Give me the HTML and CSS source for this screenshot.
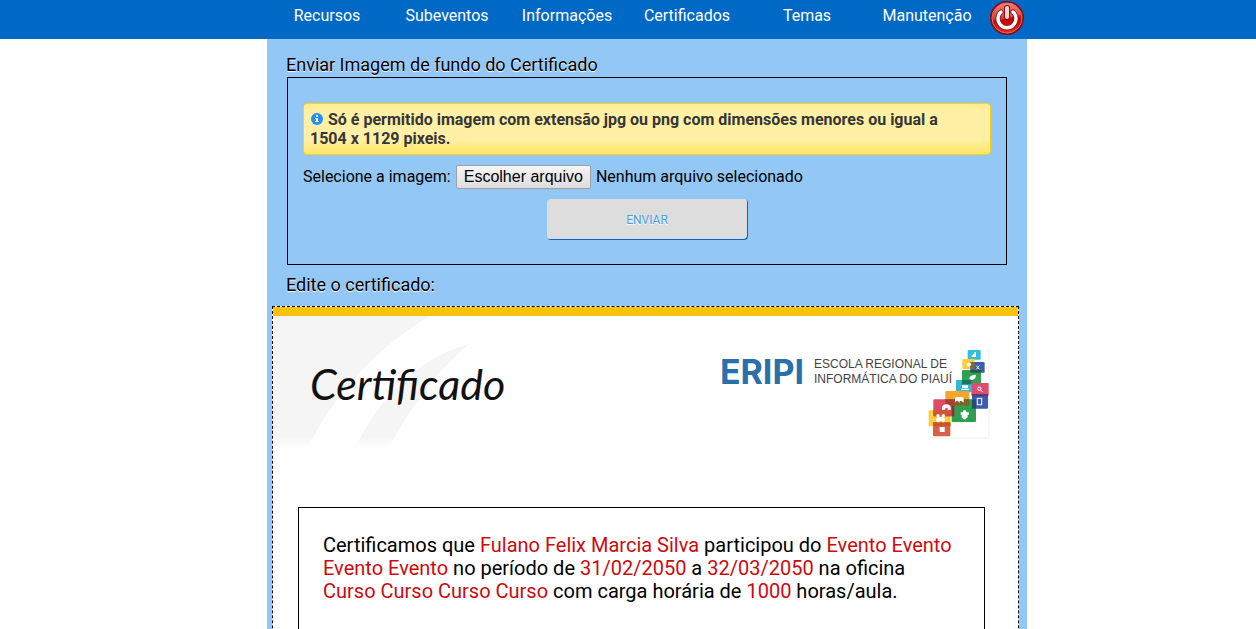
FILE: index.html
```
<!DOCTYPE html>
<html lang="pt-BR">
<head>
<meta charset="utf-8">
<title>Certificados</title>
<link rel="stylesheet" href="styles.css">
</head>
<body>
<header class="topbar">
  <nav class="menu" aria-label="Principal">
    <a class="menu-link" href="#recursos">Recursos</a>
    <a class="menu-link" href="#subeventos">Subeventos</a>
    <a class="menu-link" href="#informacoes">Informações</a>
    <a class="menu-link" href="#certificados">Certificados</a>
    <a class="menu-link" href="#temas">Temas</a>
    <a class="menu-link" href="#manutencao">Manutenção</a>
    <a class="menu-exit" href="#sair" aria-label="Sair">
      <svg width="34" height="34" viewBox="0 0 34 34" aria-hidden="true">
        <defs>
          <linearGradient id="exit-fill" x1="0" y1="0" x2="0" y2="1">
            <stop offset="0" stop-color="#e8605c"/>
            <stop offset="0.45" stop-color="#d21a18"/>
            <stop offset="0.55" stop-color="#b80606"/>
            <stop offset="1" stop-color="#ee2a22"/>
          </linearGradient>
        </defs>
        <circle cx="17" cy="17" r="17" fill="#8c0a10"/>
        <circle cx="17" cy="17" r="15" fill="url(#exit-fill)" stroke="#e0706c" stroke-width="1"/>
        <path d="M3 19A14 14 0 0 1 31 14C24 14 12 21 3 19Z" fill="#fff" opacity="0.2"/>
        <path d="M11 11A9 9 0 1 0 23 11" fill="none" stroke="#8d1010" stroke-width="5" stroke-linecap="round"/>
        <path d="M17 7V16" stroke="#8d1010" stroke-width="6" stroke-linecap="round"/>
        <path d="M11 11A9 9 0 1 0 23 11" fill="none" stroke="#fff" stroke-width="3.4" stroke-linecap="round"/>
        <path d="M17 7V16" stroke="#f3d4d4" stroke-width="4" stroke-linecap="round"/>
      </svg>
    </a>
  </nav>
</header>
<div class="page">
  <main class="content">
    <h2 class="title">Enviar Imagem de fundo do Certificado</h2>
    <form class="upload">
      <p class="notice">
        <svg class="notice-icon" width="12" height="12" viewBox="0 0 12 12" aria-hidden="true">
          <circle cx="6" cy="6" r="6" fill="#2191f5"/>
          <path d="M5 2H7V4H5ZM4 5H7V8H8V9H4V8H5V6H4Z" fill="#fff"/>
        </svg>
        Só é permitido imagem com extensão jpg ou png com dimensões menores ou igual a 1504 x 1129 pixeis.
      </p>
      <div class="file-row">
        <label for="arquivo">Selecione a imagem:</label>
        <input class="file-input" type="file" id="arquivo" accept=".jpg,.png" tabindex="-1">
        <button class="file-button" type="button" onclick="document.getElementById('arquivo').click()">Escolher arquivo</button>
        <span>Nenhum arquivo selecionado</span>
      </div>
      <button class="submit" type="submit">ENVIAR</button>
    </form>
    <h2 class="title">Edite o certificado:</h2>
    <section class="certificate">
      <div class="cert-head">
        <svg class="cert-art" width="240" height="132" viewBox="0 0 240 132" aria-hidden="true">
          <defs>
            <linearGradient id="art-fill" x1="0" y1="0" x2="0" y2="132" gradientUnits="userSpaceOnUse">
              <stop offset="0.92" stop-color="#f5f5f5"/>
              <stop offset="1" stop-color="#fff"/>
            </linearGradient>
          </defs>
          <path d="M0 0H156Q78 48 34 132H0Z" fill="url(#art-fill)"/>
          <path d="M196 28Q124 48 82 132H116Q150 66 196 28Z" fill="url(#art-fill)"/>
        </svg>
        <h1 class="cert-title">Certificado</h1>
        <div class="brand">
          <span class="brand-name">ERIPI</span>
          <span class="brand-text">ESCOLA REGIONAL DE<br>INFORMÁTICA DO PIAUÍ</span>
          <svg class="brand-tiles" width="63" height="91" viewBox="33 27 189 273" aria-hidden="true">
            <path d="M219 30V297H36" fill="none" stroke="#eee" stroke-width="3"/>
            <g opacity="0.94">
              <rect x="155" y="33" width="39" height="29" rx="3" fill="#27bcd8"/>
              <rect x="139" y="60" width="37" height="30" rx="3" fill="#fbcb2f"/>
              <rect x="163" y="69" width="43" height="32" rx="3" fill="#2f55a5"/>
              <rect x="163" y="69" width="13" height="21" fill="#76602c"/>
              <rect x="138" y="93" width="57" height="43" rx="3" fill="#229c4b"/>
              <rect x="163" y="93" width="32" height="8" fill="#174b3a"/>
              <rect x="120" y="123" width="47" height="37" rx="3" fill="#27b5d0"/>
              <rect x="138" y="123" width="29" height="13" fill="#116c59"/>
              <rect x="166" y="132" width="52" height="39" rx="3" fill="#da4168"/>
              <rect x="88" y="156" width="72" height="44" rx="3" fill="#f3a022"/>
              <rect x="168" y="165" width="48" height="44" rx="3" fill="#3151ab"/>
              <rect x="168" y="165" width="48" height="7" fill="#552b70"/>
              <rect x="107" y="181" width="73" height="68" rx="3" fill="#229b48"/>
              <rect x="107" y="181" width="53" height="19" fill="#765b19"/>
              <rect x="168" y="181" width="12" height="28" fill="#17445c"/>
              <rect x="38" y="214" width="66" height="48" rx="3" fill="#fbcb32"/>
              <rect x="52" y="181" width="63" height="51" rx="3" fill="#db405d"/>
              <rect x="88" y="181" width="27" height="19" fill="#a43224"/>
              <rect x="107" y="200" width="8" height="32" fill="#63362c"/>
              <rect x="52" y="214" width="52" height="18" fill="#d04c27"/>
              <rect x="51" y="250" width="52" height="42" rx="3" fill="#d45a3c"/>
              <rect x="51" y="250" width="52" height="12" fill="#c84a1d"/>
            </g>
            <g fill="#fff">
              <path d="M167 54V49H171V45H175V39H180V54Z"/>
              <path d="M152 77A7 6 0 0 1 166 77L162 82H155Z"/>
              <path d="M160 119Q161 107 180 108Q180 121 166 123Z"/>
              <path d="M138 139H156V147H138ZM136 149H158V153H136Z"/>
              <path d="M117 188V179Q117 174 123 174H136Q143 174 143 180V191L137 186H131V192L125 185Z"/>
              <path d="M78 213V207A13 11 0 0 1 104 207V213H95V206H89L86 213Z"/>
              <path d="M134 220H140L143 214H149L152 220H159V227H155V235L148 241H143L137 235V227H134Z"/>
              <circle cx="66" cy="230" r="5"/><circle cx="82" cy="230" r="5"/>
              <path d="M59 240L67 234H81L88 240L84 250H79V246H70V250H63Z"/>
              <rect x="71" y="264" width="15" height="15"/>
            </g>
            <g fill="none" stroke="#fff" stroke-width="3">
              <path d="M181 80L190 91M190 80L181 91"/>
              <circle cx="190" cy="149" r="5"/><path d="M194 153L200 159"/>
              <rect x="184" y="178" width="13" height="19"/>
            </g>
          </svg>
        </div>
      </div>
      <div class="cert-body">
        <p class="cert-text">Certificamos que <span class="field">Fulano Felix Marcia Silva</span> participou do <span class="field">Evento Evento Evento Evento</span> no período de <span class="field">31/02/2050</span> a <span class="field">32/03/2050</span> na oficina <span class="field">Curso Curso Curso Curso</span> com carga horária de <span class="field">1000</span> horas/aula.</p>
      </div>
    </section>
  </main>
</div>
</body>
</html>
```
FILE: styles.css
```
* { box-sizing: border-box; }

body {
  margin: 0;
  background: #fff;
  color: #000;
  font-family: "Trebuchet MS", Roboto, sans-serif;
  font-size: 16px;
  line-height: 20px;
}

.topbar,
.page { padding-left: 38px; }

.topbar { background: #0069c6; }

.menu {
  display: flex;
  max-width: 760px;
  min-height: 39px;
  margin: 0 auto;
}

.menu-link {
  flex: 1 1 120px;
  padding-top: 6px;
  color: #fff;
  text-align: center;
  text-decoration: none;
}

.menu-exit {
  flex: 0 0 40px;
  padding: 1px 3px 0;
}

.menu-exit svg { display: block; }

.content {
  max-width: 760px;
  min-height: 100vh;
  margin: 0 auto;
  padding: 14px 8px 0 5px;
  background: #93c7f6;
}

.title {
  margin: 0 14px;
  font-size: 18px;
  font-weight: 400;
  line-height: 24px;
  text-shadow: 0 1px 1px #fff;
}

.upload {
  margin: 0 12px 8px 15px;
  padding: 25px 15px 24px;
  border: 1px solid #000;
}

.notice {
  margin: 0 0 10px;
  padding: 6px 30px 6px 6px;
  border: 1px solid #fcd113;
  border-radius: 4px;
  background: linear-gradient(#ffec8c 0, #fff0a5 15%, #fff0a5 70%, #ffe566);
  color: #363636;
  font-weight: 700;
  line-height: 19px;
}

.notice-icon { margin: 0 1px; }

.file-row {
  display: flex;
  align-items: center;
  gap: 5px;
  margin-bottom: 10px;
}

.file-input {
  position: absolute;
  width: 1px;
  height: 1px;
  opacity: 0;
}

.file-button {
  height: 24px;
  padding: 0 7px;
  border: 1px solid #a0a0a0;
  border-radius: 2px;
  background: linear-gradient(#f6f6f6, #dcdcdc);
  color: #000;
  font: 16px "Liberation Sans", Arial, sans-serif;
}

.submit {
  display: block;
  width: 201px;
  height: 41px;
  margin: 0 auto;
  border: 0;
  border-radius: 4px;
  background: #ddd;
  box-shadow: inset -1px -1px 0 #0069c6;
  color: #4a9ee8;
  font-family: inherit;
  font-size: 12px;
  text-shadow: 0 1px 1px #fff;
}

.certificate {
  margin-top: 9px;
  padding-bottom: 40px;
  border: 1px dashed #000;
  background: #fff;
}

.cert-head {
  display: flex;
  justify-content: space-between;
  align-items: flex-start;
  position: relative;
  min-height: 200px;
  padding: 32px 28px 0 37px;
  border-top: 9px solid #f9c30b;
}

.cert-art {
  position: absolute;
  top: 0;
  left: 0;
}

.cert-title {
  position: relative;
  margin: 10px 0 0;
  color: #111;
  font-family: Lato, sans-serif;
  font-size: 43px;
  font-style: italic;
  font-weight: 400;
  line-height: 52px;
}

.brand {
  display: flex;
  align-items: flex-start;
}

.brand-name {
  margin-right: 10px;
  padding-top: 6px;
  color: #2a70a9;
  font-family: Inter, sans-serif;
  font-size: 34px;
  font-weight: 700;
  line-height: 36px;
}

.brand-text {
  margin-right: -25px;
  padding-top: 9px;
  color: #444;
  font-family: "Liberation Sans", Arial, sans-serif;
  font-size: 12px;
  line-height: 15px;
  white-space: nowrap;
}

.cert-body {
  min-height: 240px;
  margin: 0 33px 0 25px;
  padding: 26px 24px;
  border: 1px solid #000;
}

.cert-text {
  margin: 0;
  font-size: 20px;
  line-height: 23px;
}

.field { color: #cc0a0f; }
```
